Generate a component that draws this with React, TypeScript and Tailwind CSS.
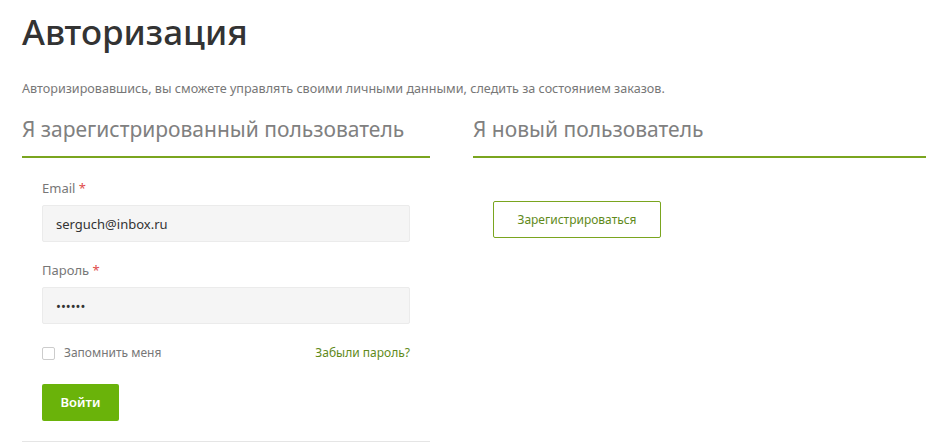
const font = { fontFamily: '"Noto Sans", "Open Sans", sans-serif' };

const App = () => {
    return (
        <div
            className="min-h-[445px] bg-white pt-[8px] pl-[22px] text-[#333]"
            style={font}
        >
            <h1 className="text-[35px] leading-[48px] font-medium text-[#333]">
                Авторизация
            </h1>
            <p className="mt-[24px] text-[12.6px] leading-[18px] text-[#777]">
                Авторизировавшись, вы сможете управлять своими личными
                данными, следить за состоянием заказов.
            </p>
            <div className="mt-[18px] flex gap-[43px]">
                <LoginColumn />
                <RegisterColumn />
            </div>
        </div>
    );
};

export default App;

/* -------------------------------------------------------------------------- */

const SectionTitle = ({ children }: { children: string }) => {
    return (
        <div className="border-b-2 border-[#7aa51f] pb-[14px]">
            <h2 className="text-[21px] leading-[26px] font-normal text-[#808080]">
                {children}
            </h2>
        </div>
    );
};

const Field = ({
    label,
    value,
    type,
}: {
    label: string;
    value: string;
    type: string;
}) => {
    return (
        <div className="flex flex-col gap-[8px]">
            <label className="text-[13px] leading-[18px] text-[#777]">
                {label} <span className="text-[#e04b4b]">*</span>
            </label>
            <input
                type={type}
                defaultValue={value}
                readOnly
                className="h-[37px] w-full rounded-[2px] border border-[#ebebeb] bg-[#f5f5f5] px-[13px] text-[13px] text-[#333] outline-none"
                style={font}
            />
        </div>
    );
};

const LoginColumn = () => {
    return (
        <div className="w-[408px] shrink-0">
            <SectionTitle>Я зарегистрированный пользователь</SectionTitle>
            <div className="border-b border-[#e5e5e5] px-[20px] pt-[21px] pb-[20px]">
                <Field label="Email" value="serguch@inbox.ru" type="text" />
                <div className="mt-[19px]">
                    <Field label="Пароль" value="123456" type="password" />
                </div>
                <div className="mt-[20px] flex items-center justify-between">
                    <label className="flex items-center gap-[9px] text-[12px] text-[#777]">
                        <span className="size-[13px] rounded-[2px] border border-[#ccc] bg-white" />
                        Запомнить меня
                    </label>
                    <a className="text-[12px] text-[#5f8a1a]">Забыли пароль?</a>
                </div>
                <button
                    className="mt-[22px] h-[37px] w-[77px] rounded-[2px] bg-[#6ab30a] text-[13px] font-semibold text-white"
                    style={font}
                >
                    Войти
                </button>
            </div>
        </div>
    );
};

const RegisterColumn = () => {
    return (
        <div className="flex-1">
            <SectionTitle>Я новый пользователь</SectionTitle>
            <div className="px-[20px] pt-[43px]">
                <button
                    className="h-[37px] w-[168px] rounded-[2px] border border-[#7aa51f] bg-white text-[12px] text-[#5f8a1a]"
                    style={font}
                >
                    Зарегистрироваться
                </button>
            </div>
        </div>
    );
};
